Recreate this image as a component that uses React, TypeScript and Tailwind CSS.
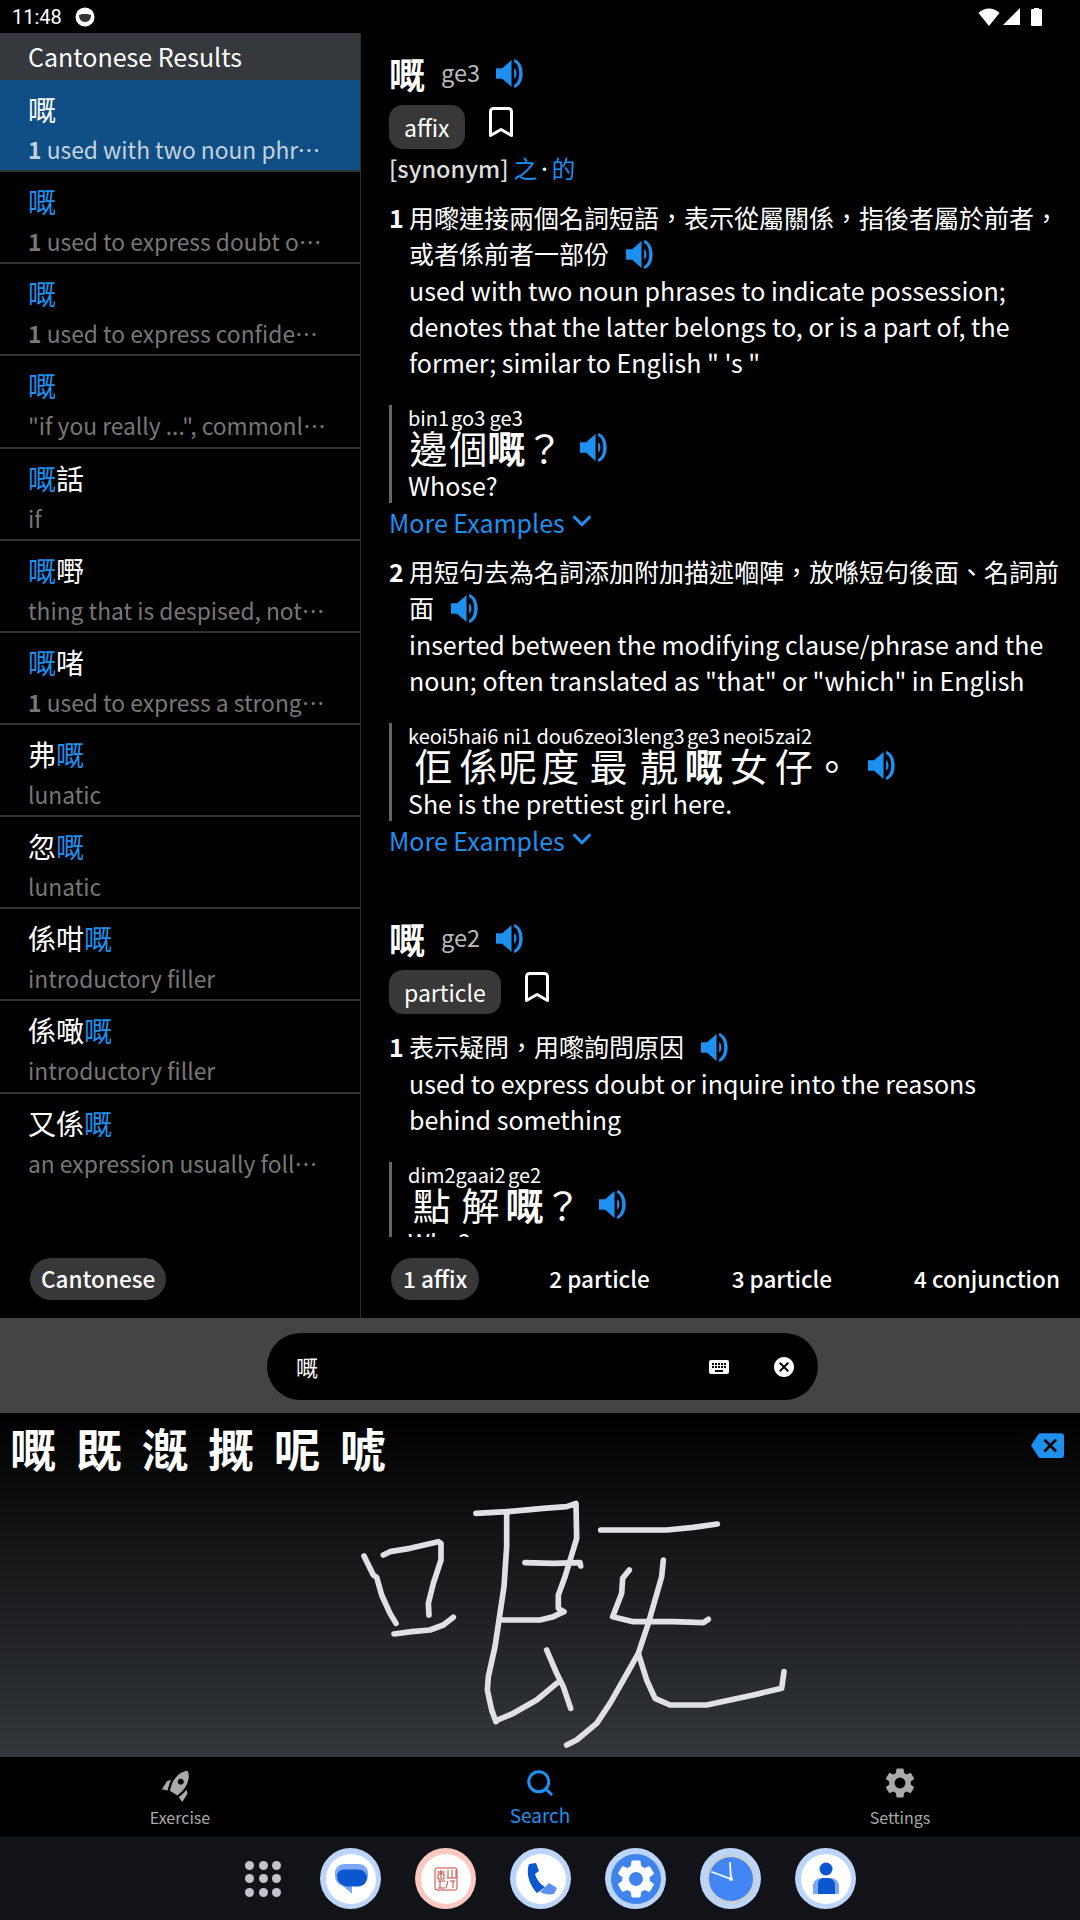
import { Bookmark, ChevronDown, Search } from "lucide-react";
import { MdBackspace, MdCancel, MdKeyboard, MdRocket, MdSettings } from "react-icons/md";

const font = { fontFamily: '"Noto Sans CJK TC", "Noto Sans", sans-serif' };

const rows = [
  { word: "嘅", hit: "嘅", num: "1", text: "used with two noun phrases to indicate possession" },
  { word: "嘅", hit: "嘅", num: "1", text: "used to express doubt or inquire into the reasons" },
  { word: "嘅", hit: "嘅", num: "1", text: "used to express confidence in a statement" },
  { word: "嘅", hit: "嘅", text: '"if you really ...", commonly used in a question' },
  { word: "嘅話", hit: "嘅", text: "if" },
  { word: "嘅嘢", hit: "嘅", text: "thing that is despised, not worth mentioning" },
  { word: "嘅啫", hit: "嘅", num: "1", text: "used to express a strong feeling about it" },
  { word: "弗嘅", hit: "嘅", text: "lunatic" },
  { word: "忽嘅", hit: "嘅", text: "lunatic" },
  { word: "係咁嘅", hit: "嘅", text: "introductory filler" },
  { word: "係噉嘅", hit: "嘅", text: "introductory filler" },
  { word: "又係嘅", hit: "嘅", text: "an expression usually followed by a remark" },
];

// handwriting strokes, in crop pixels of the 460x280 drawing box
const strokes = [
  "M72 228 L100 285 L110 292 L125 345 L150 400 L168 430",
  "M130 225 L150 215 L210 205 L295 185 L303 190 L303 240 L280 310 L265 370 L267 405",
  "M162 462 L215 455 L270 450 L310 435 L340 412",
  "M408 100 L500 95 L610 85 L680 80 L708 70 L710 175 L695 225 L675 290 L655 345 L655 385 L670 395",
  "M500 95 L500 200 L492 320 L480 400 L465 500 L445 590 L442 630 L455 690 L468 725",
  "M555 248 L640 250 L720 248 L722 258",
  "M480 420 L600 420 L640 410 L672 395",
  "M468 722 L520 700 L590 660 L650 610",
  "M620 510 L650 580 L670 620 L692 685",
  "M782 150 L980 150 L1060 142 L1132 132",
  "M868 270 L848 295 L845 340 L818 410 L880 425 L1000 425 L1090 428 L1105 418",
  "M970 240 L965 290 L945 360 L925 430 L895 520 L850 600 L810 670 L770 730 L710 780 L680 795",
  "M895 520 L920 600 L945 655 L990 675 L1100 675 L1240 645 L1325 625 L1332 575",
];

function Speaker() {
  return (
    <svg viewBox="0 0 28 28" className="inline-block h-[29px] w-[29px] fill-[#1e90f0] align-[-5px]">
      <path d="M0 9h6l9-8v26l-9-8H0z" />
      <path d="M17.500 9c3 1.500 3 8.500 0 10z" />
      <path d="M17.500 0c11 2.500 11 25.500 0 28v-3c6.500-2.500 6.500-19.500 0-22z" />
    </svg>
  );
}

function StatusBar() {
  return (
    <div className="relative flex h-[33px] items-center justify-between bg-black pl-3 pr-[38px] text-white">
      <div className="flex items-center gap-[13px]">
        <span className="text-[20px] leading-none" style={{ fontFamily: "Roboto, sans-serif" }}>11:48</span>
        <svg viewBox="0 0 20 20" className="h-[20px] w-[20px]">
          <circle cx="10" cy="10" r="9.500" fill="#fff" />
          <path d="M4 8c2-1.500 10-1.500 12 0 0 4-2 7-6 7s-6-3-6-7z" fill="#333" />
        </svg>
      </div>
      <div className="flex items-center gap-[3px]">
        <svg viewBox="0 0 21 18" className="h-[18px] w-[22px] fill-white">
          <path d="M0 5c5.500-6 15.500-6 21 0L10.500 18z" />
        </svg>
        <svg viewBox="0 0 17 17" className="mr-[8px] h-[17px] w-[17px] fill-white">
          <path d="M17 0v17H0z" />
        </svg>
        <svg viewBox="0 0 11 18" className="h-[18px] w-[11px] fill-white">
          <path d="M3 1V0h5v1h2a1 1 0 0 1 1 1v15a1 1 0 0 1-1 1H1a1 1 0 0 1-1-1V2a1 1 0 0 1 1-1z" />
        </svg>
      </div>
    </div>
  );
}

function ResultRow({ row, selected, last }: { row: (typeof rows)[number]; selected: boolean; last: boolean }) {
  const parts = row.word.split(row.hit);
  return (
    <div className={`h-[92.15px] pl-[28px] pr-[33px] ${last ? "" : "border-b-2 border-[#333]"} ${selected ? "bg-[#0f4f85]" : ""}`}>
      <div className="pt-[9px] text-[28px] leading-[40px] text-white">
        {parts[0]}
        <span className={selected ? "text-white" : "text-[#1e90f0]"}>{row.hit}</span>
        {parts[1]}
      </div>
      <div className={`mt-[5px] truncate text-[22.8px] leading-[32px] ${selected ? "text-[#c5d2de]" : "text-[#777]"}`}>
        {row.num && <b className="font-bold">{row.num} </b>}
        {row.text}
      </div>
    </div>
  );
}

function Ruby({ items }: { items: [string, string][] }) {
  return (
    <div className="flex items-end">
      {items.map(([rom, han], i) => (
        <div key={i} className="flex flex-col items-center">
          <span className="h-[18px] text-[20px] leading-[18px] text-white">{rom}</span>
          <span className={`w-[38px] text-center text-[38px] leading-[40px] text-white ${han === "嘅" ? "font-bold" : ""}`}>{han}</span>
        </div>
      ))}
    </div>
  );
}

function Example({ items, en }: { items: [string, string][]; en?: string }) {
  return (
    <div className="border-l-[3px] border-[#666] pl-[16px] pt-[4px]">
      <div className="flex items-center gap-[17px]">
        <Ruby items={items} />
        <div className="pt-[18px] leading-none"><Speaker /></div>
      </div>
      {en && <div className="mt-[1px] text-[25px] leading-[35px] text-white">{en}</div>}
    </div>
  );
}

function MoreExamples() {
  return (
    <div className="flex h-[40px] items-center gap-[2px] text-[25px] text-[#1e90f0]">
      More Examples
      <ChevronDown size={30} strokeWidth={2.500} className="mt-[-4px]" />
    </div>
  );
}

function Definition({ num, zh, lines, children }: { num: string; zh: string; lines: string; children: React.ReactNode }) {
  return (
    <div>
      <div className="flex text-[25px] leading-[36px] text-white">
        <b className="w-[20px] shrink-0 font-bold">{num}</b>
        <div>
          <div>
            {zh} <span className="ml-[11px]"><Speaker /></span>
          </div>
          <div className="mt-[1px]">{lines}</div>
        </div>
      </div>
      <div className="mt-[25px]">{children}</div>
    </div>
  );
}

function EntryHead({ pos, jyut }: { pos: string; jyut: string }) {
  return (
    <div>
      <div className="flex h-[48px] items-center">
        <span className="text-[36px] font-bold leading-none text-white">嘅</span>
        <span className="ml-[16px] text-[23.5px] text-[#bbb]">{jyut}</span>
        <span className="ml-[16px] leading-none"><Speaker /></span>
      </div>
      <div className="mt-[8px] flex items-start gap-[18px]">
        <span className="rounded-[14px] bg-[#383838] px-[15px] text-[23px] leading-[44px] text-white">{pos}</span>
        <Bookmark size={36} strokeWidth={2} className="mt-[-1px] text-white" />
      </div>
    </div>
  );
}

function Detail() {
  return (
    <div className="h-[1204px] overflow-hidden pl-[28px] pr-[19px] pt-[16px]">
      <EntryHead pos="affix" jyut="ge3" />
      <div className="mt-[1px] text-[23.5px] font-medium leading-[36px] text-[#ddd]">
        [synonym] <span className="font-normal text-[#1e90f0]">之</span>
        <span className="mx-[4px] font-['Noto_Sans'] text-white">·</span>
        <span className="font-normal text-[#1e90f0]">的</span>
      </div>
      <div className="mt-[12px]">
        <Definition
          num="1"
          zh="用嚟連接兩個名詞短語，表示從屬關係，指後者屬於前者，或者係前者一部份"
          lines={`used with two noun phrases to indicate possession; denotes that the latter belongs to, or is a part of, the former; similar to English " 's "`}
        >
          <Example items={[["bin1", "邊"], ["go3", "個"], ["ge3", "嘅"], ["", "？"]]} en="Whose?" />
          <MoreExamples />
        </Definition>
      </div>
      <div className="mt-[10px]">
        <Definition
          num="2"
          zh="用短句去為名詞添加附加描述嗰陣，放喺短句後面、名詞前面"
          lines={`inserted between the modifying clause/phrase and the noun; often translated as "that" or "which" in English`}
        >
          <Example
            items={[["keoi5", "佢"], ["hai6", "係"], ["ni1", "呢"], ["dou6", "度"], ["zeoi3", "最"], ["leng3", "靚"], ["ge3", "嘅"], ["neoi5", "女"], ["zai2", "仔"], ["", "。"]]}
            en="She is the prettiest girl here."
          />
          <MoreExamples />
        </Definition>
      </div>
      <div className="mt-[53px]">
        <EntryHead pos="particle" jyut="ge2" />
        <div className="mt-[14px]">
          <Definition
            num="1"
            zh="表示疑問，用嚟詢問原因"
            lines="used to express doubt or inquire into the reasons behind something"
          >
            <Example items={[["dim2", "點"], ["gaai2", "解"], ["ge2", "嘅"], ["", "？"]]} en="Why?" />
          </Definition>
        </div>
      </div>
    </div>
  );
}

function Tab({ label, active, children }: { label: string; active?: boolean; children: React.ReactNode }) {
  return (
    <div className={`flex flex-col items-center ${active ? "text-[#1e90f0]" : "text-[#aaa]"}`}>
      <div className="flex h-[36px] items-center">{children}</div>
      <span className={active ? "text-[19px] leading-[28px]" : "mt-[4px] text-[16px] leading-[24px]"}>{label}</span>
    </div>
  );
}

function Dock({ ring, inner, children }: { ring: string; inner: string; children: React.ReactNode }) {
  return (
    <div className={`flex h-[61px] w-[61px] items-center justify-center rounded-full ${ring}`}>
      <div className={`flex h-[50px] w-[50px] items-center justify-center rounded-full ${inner}`}>{children}</div>
    </div>
  );
}

export default function App() {
  return (
    <div className="flex h-[1920px] w-[1080px] flex-col overflow-hidden bg-black" style={font}>
      <StatusBar />
      <div className="flex h-[1285px]">
        <div className="flex w-[361px] shrink-0 flex-col border-r border-[#2e2e2e]">
          <div className="h-[47px] bg-[#35383c] pl-[28px] text-[25px] leading-[47px] text-white">Cantonese Results</div>
          <div className="h-[1158px] overflow-hidden">
            {rows.map((row, i) => (
              <ResultRow key={i} row={row} selected={i === 0} last={i === rows.length - 1} />
            ))}
          </div>
          <div className="flex h-[80px] items-start pl-[30px] pt-[20px]">
            <span className="rounded-full bg-[#383838] px-[11px] pb-[2px] text-[22.5px] font-medium leading-[40px] text-white">Cantonese</span>
          </div>
        </div>
        <div className="min-w-0 flex-1">
          <Detail />
          <div className="flex h-[81px] items-start gap-[58px] whitespace-nowrap pl-[30px] pt-[21px] text-[22.5px] font-medium leading-[40px] text-white">
            <span className="rounded-full bg-[#383838] px-[12px] pb-[2px]">1 affix</span>
            <span className="px-[12px]">2 particle</span>
            <span className="px-[12px]">3 particle</span>
            <span className="px-[12px]">4 conjunction</span>
          </div>
        </div>
      </div>

      <div className="flex h-[95px] items-start justify-center bg-[#444] pl-[5px] pt-[15px]">
        <div className="flex h-[67px] w-[551px] items-center rounded-full bg-black pl-[29px] pr-[22px] text-[22px] text-white">
          <span className="flex-1">嘅</span>
          <MdKeyboard size={24} className="mr-[41px]" />
          <MdCancel size={24} />
        </div>
      </div>

      <div className="relative flex h-[344px] items-start justify-between bg-linear-to-b/srgb from-black to-[#33373b] pl-[10px] pr-[16px] pt-[4px]">
        <div className="flex gap-[20px] text-[46px] font-bold leading-[60px] text-white">
          {["嘅", "既", "漑", "摡", "呢", "唬"].map((c) => (
            <span key={c}>{c}</span>
          ))}
        </div>
        <MdBackspace size={33} className="mt-[12px] text-[#1e90f0]" />
        <svg viewBox="0 0 1380 840" className="absolute left-[340px] top-[67px] h-[280px] w-[460px]">
          {strokes.map((d) => (
            <path key={d} d={d} fill="none" stroke="#dfe1e4" strokeWidth="17" strokeLinecap="round" strokeLinejoin="round" />
          ))}
        </svg>
      </div>

      <div className="grid h-[80px] grid-cols-[360px_360px_360px] items-start bg-black pt-[8px]">
        <div className="flex justify-center">
          <Tab label="Exercise"><MdRocket size={36} className="rotate-[32deg]" /></Tab>
        </div>
        <div className="flex justify-center">
          <Tab label="Search" active><Search size={30} strokeWidth={2.400} /></Tab>
        </div>
        <div className="flex justify-center">
          <Tab label="Settings"><MdSettings size={36} /></Tab>
        </div>
      </div>

      <div className="flex flex-1 items-center bg-[#121318] pl-[245px]">
        <div className="mr-[39px] grid grid-cols-3 gap-[4.5px]">
          {Array.from({ length: 9 }).map((_, i) => (
            <span key={i} className="h-[9px] w-[9px] rounded-full bg-[#c4c4cc]" />
          ))}
        </div>
        <div className="flex gap-[34px]">
          <Dock ring="bg-[#bcd6fb]" inner="bg-white">
            <svg viewBox="0 0 34 34" className="h-[34px] w-[34px]">
              <path d="M1 11a9 9 0 0 1 9-9h15a9 9 0 0 1 9 9v3a9 9 0 0 1-9 9H18v9l-9-8a10 10 0 0 1-8-10z" fill="#7ba7f5" />
              <path d="M3 14a6.500 6.500 0 0 1 6.500-6.500h15a8 8 0 0 1 0 17H14C8 24 3 20 3 14z" fill="#0b57d0" />
            </svg>
          </Dock>
          <Dock ring="bg-[#fcc8c0]" inner="bg-white">
            <svg viewBox="0 0 24 24" className="h-[24px] w-[24px]" fill="none" stroke="#c5443a" strokeWidth="1">
              <rect x="1" y="1" width="22" height="22" rx="2" />
              <path d="M3 5h8M7 3v8M4 7h6v5H4zM4 14h7M6 14v7M4 21h7M14 3v8M18 3v8M22 3v8M13 11h9M14 14l-2 7M19 14v7M16 14h5" />
            </svg>
          </Dock>
          <Dock ring="bg-[#bcd6fb]" inner="bg-white">
            <svg viewBox="0 0 34 34" className="h-[34px] w-[34px]">
              <path d="M5 2l7-1 3 8-4 3c2 6 5 10 10 13l-8 6C8 26 1 14 5 2z" fill="#0b57d0" />
              <path d="M21 25l4-4 8 5-3 6c-6 1-10 0-14-2z" fill="#5c90ee" />
            </svg>
          </Dock>
          <Dock ring="bg-[#bcd6fb]" inner="bg-[#3f83ed]">
            <MdSettings size={46} className="text-white" />
          </Dock>
          <Dock ring="bg-[#bcd6fb]" inner="bg-[#c9d0d6]">
            <svg viewBox="0 0 50 50" className="h-[50px] w-[50px]">
              <circle cx="25" cy="25" r="22" fill="#4285f4" />
              <path d="M25 25L6 18M25 25L24 9" stroke="#fff" strokeWidth="1.800" strokeLinecap="round" />
              <circle cx="25" cy="25" r="2" fill="#fff" />
            </svg>
          </Dock>
          <Dock ring="bg-[#bcd6fb]" inner="bg-white">
            <svg viewBox="0 0 34 34" className="h-[34px] w-[34px]">
              <circle cx="17" cy="7" r="6.500" fill="#0b57d0" />
              <path d="M4 32V24c0-5 4-8 9-8h8c5 0 9 3 9 8v8z" fill="#7ba7f5" />
              <path d="M9 32V22c0-4 3-6 6-6h4c4 0 7 3 7 7v9z" fill="#0b57d0" />
            </svg>
          </Dock>
        </div>
      </div>
    </div>
  );
}
